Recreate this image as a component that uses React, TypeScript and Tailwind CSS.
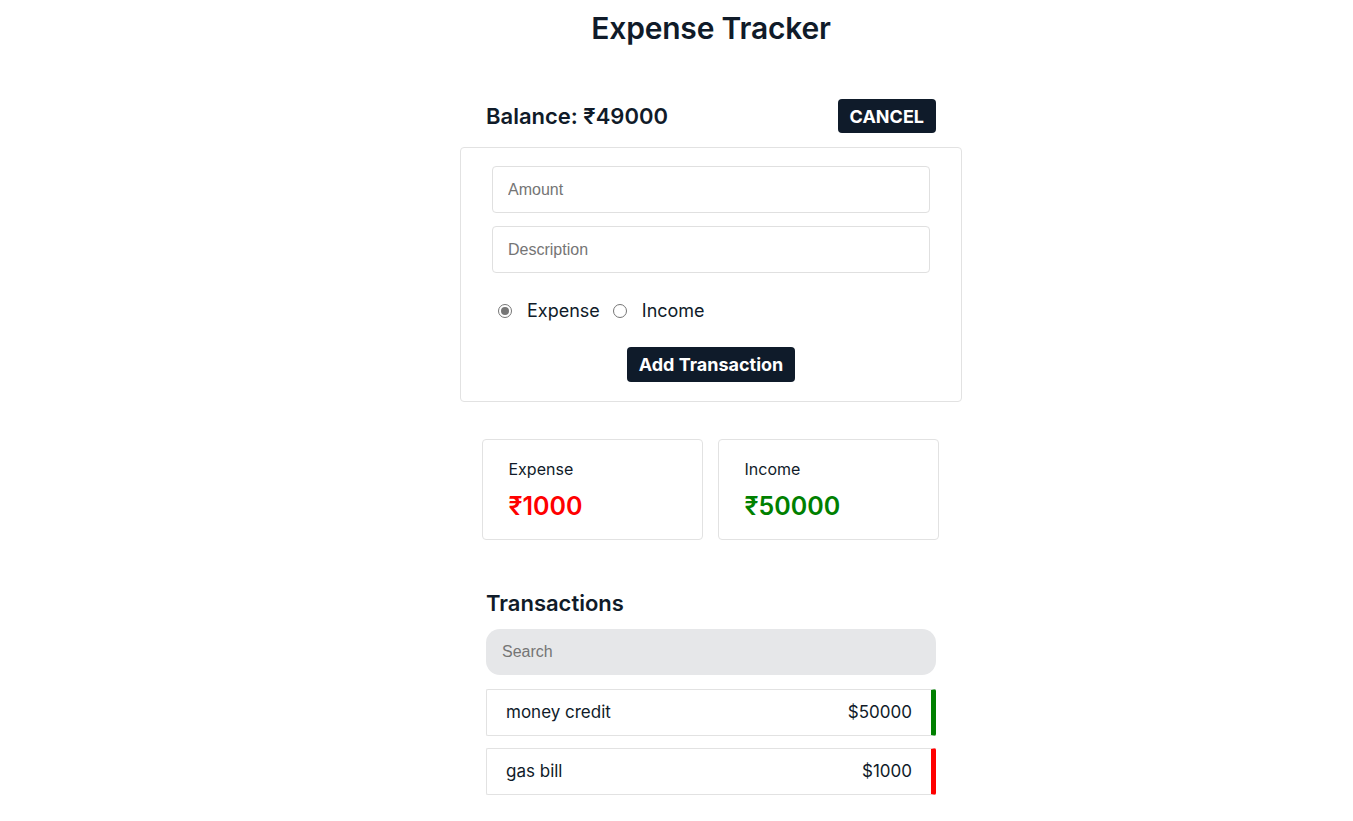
import React from "react";

export default function App() {
  const font = { fontFamily: "Inter, 'Noto Sans', sans-serif" };
  return (
    <div className="min-h-screen bg-white text-[#101b29]" style={font}>
      <div className="flex justify-center pl-[69px]">
        <div className="flex flex-col items-center">
          <h1 className="mt-[9px] text-[30px] leading-[38px] font-semibold tracking-[-0.2px]">Expense Tracker</h1>

          <div className="mt-[52px] w-[450px] flex items-center justify-between">
            <div className="text-[22px] leading-[28px] font-semibold">Balance: ₹49000</div>
            <button className="h-[34px] px-[12px] rounded-[4px] bg-[#0f1b2a] text-white text-[18px] font-bold">CANCEL</button>
          </div>

          <div className="mt-[14px] w-[502px] border border-[#e2e2e2] rounded-[4px] px-[31px] pt-[18px] pb-[19px] flex flex-col">
            <input
              placeholder="Amount"
              className="h-[47px] w-full border border-[#e0e0e0] rounded-[4px] px-[15px] text-[16px] placeholder:text-[#757575] outline-none"
              style={{ fontFamily: "Arial, 'Liberation Sans', sans-serif" }}
            />
            <input
              placeholder="Description"
              className="mt-[13px] h-[47px] w-full border border-[#e0e0e0] rounded-[4px] px-[15px] text-[16px] placeholder:text-[#757575] outline-none"
              style={{ fontFamily: "Arial, 'Liberation Sans', sans-serif" }}
            />
            <div className="mt-[25px] flex items-center text-[18px] leading-[26px] pl-[6px]">
              <span className="w-[14px] h-[14px] rounded-full border border-[#767676] flex items-center justify-center">
                <span className="w-[8px] h-[8px] rounded-full bg-[#767676]" />
              </span>
              <span className="ml-[15px]">Expense</span>
              <span className="ml-[13px] w-[14px] h-[14px] rounded-full border border-[#767676]" />
              <span className="ml-[15px]">Income</span>
            </div>
            <div className="mt-[23px] flex justify-center">
              <button className="h-[35px] px-[12px] rounded-[4px] bg-[#0f1b2a] text-white text-[18px] font-bold">Add Transaction</button>
            </div>
          </div>

          <div className="mt-[37px] mr-[2px] flex gap-[15px]">
            <div className="w-[221px] h-[101px] border border-[#e2e2e2] rounded-[4px] pl-[26px] pt-[18px]">
              <div className="text-[16px] leading-[22px]">Expense</div>
              <div className="mt-[11px] text-[25px] leading-[30px] font-semibold text-[#ff0000]">₹1000</div>
            </div>
            <div className="w-[221px] h-[101px] border border-[#e2e2e2] rounded-[4px] pl-[26px] pt-[18px]">
              <div className="text-[16px] leading-[22px]">Income</div>
              <div className="mt-[11px] text-[25px] leading-[30px] font-semibold text-[#008000]">₹50000</div>
            </div>
          </div>

          <div className="mt-[48px] w-[450px] flex flex-col">
            <h2 className="text-[22px] leading-[30px] font-semibold">Transactions</h2>
            <input
              placeholder="Search"
              className="mt-[11px] h-[46px] w-full rounded-[14px] bg-[#e6e7e9] px-[16px] text-[16px] placeholder:text-[#757575] outline-none"
              style={{ fontFamily: "Arial, 'Liberation Sans', sans-serif" }}
            />
            <div className="mt-[14px] h-[47px] flex items-center justify-between border border-[#e2e2e2] border-r-[5px] border-r-[#008000] rounded-[2px] pl-[19px] pr-[19px] text-[17px]">
              <span>money credit</span>
              <span>$50000</span>
            </div>
            <div className="mt-[12px] h-[47px] flex items-center justify-between border border-[#e2e2e2] border-r-[5px] border-r-[#ff0000] rounded-[2px] pl-[19px] pr-[19px] text-[17px]">
              <span>gas bill</span>
              <span>$1000</span>
            </div>
          </div>
        </div>
      </div>
    </div>
  );
}
